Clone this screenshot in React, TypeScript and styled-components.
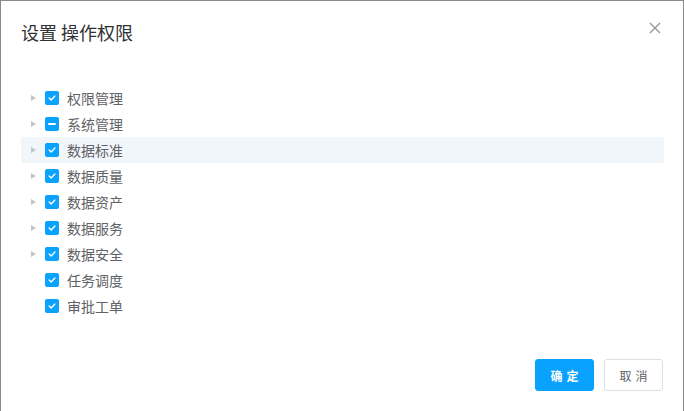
import React from 'react'
import styled, {createGlobalStyle} from 'styled-components'

const GlobalStyle = createGlobalStyle`
    html, body {
        margin: 0;
        padding: 0;
        background: #ffffff;
    }
    body {
        font-family: "Noto Sans CJK SC", "Noto Sans", sans-serif;
    }
`

const primary = '#0aa2ff'

const Dialog = styled.div`
    position: relative;
    box-sizing: border-box;
    width: 684px;
    height: 411px;
    border: 1px solid #8a8a8a;
    border-bottom: none;
    background: #fff;
    display: flex;
    flex-direction: column;
`

const Header = styled.div`
    padding: 19px 20px 10px;
`

const Title = styled.span`
    font-size: 18px;
    line-height: 24px;
    color: #303133;
`

const CloseButton = styled.button`
    position: absolute;
    top: 20px;
    right: 21px;
    width: 14px;
    height: 14px;
    padding: 0;
    border: none;
    background: transparent;
    display: flex;
    align-items: center;
    justify-content: center;
    cursor: pointer;
`

const Body = styled.div`
    flex: 1;
    padding: 30px 19px 0 20px;
`

const Tree = styled.div`
    display: flex;
    flex-direction: column;
`

const Node = styled.div<{active?: boolean}>`
    height: 26px;
    display: flex;
    align-items: center;
    background: ${(p) => (p.active ? '#f1f6fa' : 'transparent')};
`

const Expand = styled.span`
    width: 12px;
    height: 12px;
    padding: 6px;
    display: flex;
    align-items: center;
    justify-content: center;
`

const Caret = styled.span`
    width: 0;
    height: 0;
    border-top: 3.5px solid transparent;
    border-bottom: 3.5px solid transparent;
    border-left: 5px solid #c0c4cc;
    margin-left: 1px;
`

const Box = styled.span`
    width: 14px;
    height: 14px;
    border-radius: 2px;
    background: ${primary};
    margin-right: 8px;
    display: flex;
    align-items: center;
    justify-content: center;
`

const Dash = styled.span`
    width: 8px;
    height: 2px;
    background: #fff;
    border-radius: 1px;
`

const Label = styled.span`
    font-size: 14px;
    line-height: 14px;
    margin-top: -1px;
    color: #606266;
`

const Footer = styled.div`
    display: flex;
    justify-content: flex-end;
    gap: 10px;
    padding: 0 20px 20px 20px;
`

const Button = styled.button<{primary?: boolean}>`
    box-sizing: border-box;
    width: 59px;
    height: 32px;
    border-radius: 3px;
    font-family: inherit;
    font-size: 12px;
    letter-spacing: 4px;
    text-indent: 4px;
    padding: 0;
    cursor: pointer;
    border: 1px solid ${(p) => (p.primary ? primary : '#dcdfe6')};
    background: ${(p) => (p.primary ? primary : '#fff')};
    color: ${(p) => (p.primary ? '#fff' : '#606266')};
    font-weight: ${(p) => (p.primary ? 600 : 400)};
`

type Item = {
    label: string
    leaf?: boolean
    state: 'checked' | 'half'
}

const items: Item[] = [
    {label: '权限管理', state: 'checked'},
    {label: '系统管理', state: 'half'},
    {label: '数据标准', state: 'checked'},
    {label: '数据质量', state: 'checked'},
    {label: '数据资产', state: 'checked'},
    {label: '数据服务', state: 'checked'},
    {label: '数据安全', state: 'checked'},
    {label: '任务调度', state: 'checked', leaf: true},
    {label: '审批工单', state: 'checked', leaf: true},
]

const CheckMark = () => (
    <svg width="10" height="10" viewBox="0 0 10 10">
        <path d="M2.2 5.1 L4.2 7 L7.9 3" fill="none" stroke="#fff" strokeWidth="1.4" strokeLinecap="round" strokeLinejoin="round" />
    </svg>
)

export default function App() {
    return (
        <>
            <GlobalStyle />
            <Dialog>
                <Header>
                    <Title>设置 操作权限</Title>
                </Header>
                <CloseButton aria-label="关闭">
                    <svg width="12" height="12" viewBox="0 0 12 12">
                        <path d="M1 1 L11 11 M11 1 L1 11" stroke="#909399" strokeWidth="1.2" />
                    </svg>
                </CloseButton>
                <Body>
                    <Tree>
                        {items.map((item, i) => (
                            <Node key={item.label} active={i === 2}>
                                <Expand>{!item.leaf && <Caret />}</Expand>
                                <Box>{item.state === 'half' ? <Dash /> : <CheckMark />}</Box>
                                <Label>{item.label}</Label>
                            </Node>
                        ))}
                    </Tree>
                </Body>
                <Footer>
                    <Button primary>确定</Button>
                    <Button>取消</Button>
                </Footer>
            </Dialog>
        </>
    )
}
